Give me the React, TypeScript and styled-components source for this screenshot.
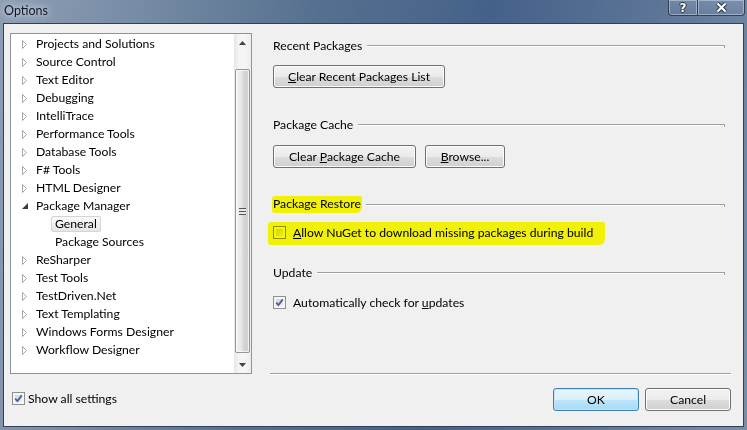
import React from "react";
import styled, { createGlobalStyle } from "styled-components";

const FONT = `"Lato", "Noto Sans", "Liberation Sans", sans-serif`;

const GlobalStyle = createGlobalStyle`
  html, body {
    margin: 0;
    padding: 0;
  }
  body {
    width: 747px;
    height: 430px;
    overflow: hidden;
    font-family: ${FONT};
    font-size: 12.2px;
    color: #000;
  }
  * {
    box-sizing: border-box;
  }
`;

const Frame = styled.div`
  width: 747px;
  height: 430px;
  display: flex;
  flex-direction: column;
  background: linear-gradient(
    100deg,
    #8d9eb3 0%,
    #7b8fa8 14%,
    #56718f 38%,
    #44618a 60%,
    #5c7597 80%,
    #7a8eaa 100%
  );
`;

const TitleBar = styled.div`
  height: 23px;
  display: flex;
  justify-content: space-between;
  align-items: flex-start;
  padding: 0 2px 0 4px;
`;

const Title = styled.div`
  line-height: 21px;
  font-size: 12.5px;
  color: #111827;
  text-shadow: 0 0 6px rgba(235, 240, 247, 0.95), 0 0 12px rgba(220, 228, 238, 0.8);
`;

const CaptionButtons = styled.div`
  display: flex;
`;

const CaptionButton = styled.div<{ $w: number; $side: "left" | "right" }>`
  width: ${({ $w }) => $w}px;
  height: 16px;
  display: flex;
  align-items: center;
  justify-content: center;
  border: 1px solid rgba(28, 40, 58, 0.75);
  border-top: none;
  border-left: ${({ $side }) => ($side === "right" ? "none" : "1px solid rgba(28, 40, 58, 0.75)")};
  border-radius: ${({ $side }) => ($side === "left" ? "0 0 0 4px" : "0 0 4px 0")};
  background: linear-gradient(to bottom, rgba(255, 255, 255, 0.12), rgba(255, 255, 255, 0.02));
  box-shadow: inset 0 0 0 1px rgba(220, 230, 242, 0.45);
`;

const HelpGlyph = styled.span`
  font-family: "DejaVu Sans", sans-serif;
  font-weight: bold;
  font-size: 12px;
  line-height: 14px;
  color: #fff;
  text-shadow: -1px 0 #2b3647, 1px 0 #2b3647, 0 -1px #2b3647, 0 1px #2b3647;
`;

const Client = styled.div`
  flex: 1;
  margin: 0 3px 3px;
  border: 1px solid #2f4058;
  background: #f0f0f0;
  display: flex;
`;

/* ---------- left: tree ---------- */

const LeftCol = styled.div`
  width: 248px;
  padding: 9px 0 0 6px;
  display: flex;
  flex-direction: column;
`;

const TreeBox = styled.div`
  width: 242px;
  height: 341px;
  border: 1px solid #8e949b;
  background: #fff;
  display: flex;
`;

const TreeList = styled.div`
  flex: 1;
  padding-top: 1px;
`;

const TreeRow = styled.div<{ $level: number }>`
  height: 18px;
  display: flex;
  align-items: center;
  padding-left: ${({ $level }) => 7 + $level * 19}px;
`;

const Expander = styled.span`
  width: 14px;
  height: 18px;
  display: flex;
  align-items: center;
  justify-content: center;
`;

const TreeLabel = styled.span<{ $selected?: boolean }>`
  height: 16px;
  line-height: 14px;
  padding: 0 3px;
  white-space: nowrap;
  border: 1px solid ${({ $selected }) => ($selected ? "#d4d4d4" : "transparent")};
  border-radius: 2px;
  background: ${({ $selected }) =>
    $selected ? "linear-gradient(to bottom, #fafafa, #e6e6e6)" : "transparent"};
`;

const ScrollBar = styled.div`
  width: 17px;
  display: flex;
  flex-direction: column;
  background: linear-gradient(to right, #e6e6e6, #f5f5f5 30%, #f5f5f5 70%, #ebebeb);
`;

const ScrollArrow = styled.div`
  height: 17px;
  display: flex;
  align-items: center;
  justify-content: center;
`;

const ScrollTrack = styled.div`
  flex: 1;
  display: flex;
  flex-direction: column;
  padding: 18px 1px 3px;
`;

const ScrollThumb = styled.div`
  flex: 1;
  border: 1px solid #979797;
  border-radius: 2px;
  background: linear-gradient(to right, #f2f2f2, #e6e6e6 45%, #d6d6d6 55%, #cfcfcf);
  box-shadow: inset 0 0 0 1px rgba(255, 255, 255, 0.7);
  display: flex;
  align-items: center;
  justify-content: center;
`;

const Gripper = styled.div`
  width: 7px;
  height: 7px;
  background: repeating-linear-gradient(
    to bottom,
    #555 0px,
    #555 1px,
    #e8e8e8 1px,
    #e8e8e8 3px
  );
`;

const FooterLeft = styled.div`
  margin: 16px 0 0 2px;
`;

/* ---------- checkbox ---------- */

const CheckRow = styled.label`
  height: 16px;
  display: flex;
  align-items: center;
  white-space: nowrap;
`;

const CheckBox = styled.span`
  width: 13px;
  height: 13px;
  flex: none;
  border: 1px solid #8e8f8f;
  background: linear-gradient(135deg, #cbcfd5, #f4f4f4);
  box-shadow: inset 0 0 0 2px #f6f6f6;
  display: flex;
  align-items: center;
  justify-content: center;
`;

const CheckText = styled.span<{ $gap: number }>`
  margin-left: ${({ $gap }) => $gap}px;
`;

const Marker = styled.span<{ $inset: string }>`
  position: relative;
  display: inline-flex;
  align-self: flex-start;
  &::after {
    content: "";
    position: absolute;
    inset: ${({ $inset }) => $inset};
    background: #ffff08;
    mix-blend-mode: multiply;
    border-radius: 3px 2px 6px 3px;
    pointer-events: none;
  }
`;

/* ---------- right: settings ---------- */

const RightCol = styled.div`
  flex: 1;
  margin-left: 18px;
  padding-right: 12px;
  display: flex;
  flex-direction: column;
`;

const Content = styled.div`
  flex: 1;
  padding: 13px 0 0 3px;
  display: flex;
  flex-direction: column;
`;

const Section = styled.section<{ $mt: number; $gap: number }>`
  margin-top: ${({ $mt }) => $mt}px;
  display: flex;
  flex-direction: column;
  gap: ${({ $gap }) => $gap}px;
`;

const GroupHeader = styled.div`
  height: 16px;
  display: flex;
  align-items: center;
  white-space: nowrap;
`;

const GroupLine = styled.div`
  position: relative;
  flex: 1;
  margin: 2px 6px 0 5px;
  height: 2px;
  border-top: 1px solid #a0a0a0;
  border-bottom: 1px solid #ffffff;
  &::after {
    content: "";
    position: absolute;
    right: 0;
    top: 0;
    width: 1px;
    height: 2px;
    background: #a0a0a0;
  }
`;

const ButtonRow = styled.div<{ $gap: number; $end?: boolean }>`
  display: flex;
  gap: ${({ $gap }) => $gap}px;
  justify-content: ${({ $end }) => ($end ? "flex-end" : "flex-start")};
`;

const Button = styled.button<{ $w: number; $default?: boolean }>`
  width: ${({ $w }) => $w}px;
  height: 23px;
  padding: 0;
  font-family: ${FONT};
  font-size: 12.2px;
  color: #000;
  border-radius: 3px;
  border: 1px solid ${({ $default }) => ($default ? "#3c7fb1" : "#707070")};
  background: ${({ $default }) =>
    $default
      ? "linear-gradient(to bottom, #eaf6fd 0%, #d9f0fc 50%, #bee6fd 51%, #a7d9f5 100%)"
      : "linear-gradient(to bottom, #f2f2f2 0%, #ebebeb 50%, #dddddd 51%, #cfcfcf 100%)"};
  box-shadow: inset 0 0 0 1px ${({ $default }) => ($default ? "#c4e5f6" : "#fcfcfc")};
`;

const Separator = styled.div`
  height: 2px;
  border-top: 1px solid #a0a0a0;
  border-bottom: 1px solid #ffffff;
`;

const Footer = styled.div`
  padding: 13px 0 15px;
`;

/* ---------- icons ---------- */

const Collapsed = () => (
  <svg width="6" height="9" viewBox="0 0 6 9">
    <path d="M0.5 0.5 L4.5 4.5 L0.5 8.5 Z" fill="#fff" stroke="#a6a6a6" />
  </svg>
);

const ExpandedIcon = () => (
  <svg width="6" height="6" viewBox="0 0 6 6">
    <path d="M6 0 L6 6 L0 6 Z" fill="#3a3a3a" />
  </svg>
);

const CheckMark = () => (
  <svg width="9" height="9" viewBox="0 0 9 9">
    <path d="M1.2 4.6 L3.4 7 L7.8 1.4" fill="none" stroke="#4a5f97" strokeWidth="1.8" />
  </svg>
);

const CloseGlyph = () => (
  <svg width="13" height="11" viewBox="0 0 13 11">
    <path d="M2.5 1.5 L10.5 9.5 M10.5 1.5 L2.5 9.5" stroke="#2b3647" strokeWidth="4.2" />
    <path d="M2.5 1.5 L10.5 9.5 M10.5 1.5 L2.5 9.5" stroke="#ffffff" strokeWidth="2.2" />
  </svg>
);

const ArrowUp = () => (
  <svg width="7" height="4" viewBox="0 0 7 4">
    <path d="M0 4 L3.5 0 L7 4 Z" fill="#404040" />
  </svg>
);

const ArrowDown = () => (
  <svg width="7" height="4" viewBox="0 0 7 4">
    <path d="M0 0 L3.5 4 L7 0 Z" fill="#404040" />
  </svg>
);

/* ---------- data ---------- */

type Node = { label: string; level?: number; expanded?: boolean; selected?: boolean };

const tree: Node[] = [
  { label: "Projects and Solutions" },
  { label: "Source Control" },
  { label: "Text Editor" },
  { label: "Debugging" },
  { label: "IntelliTrace" },
  { label: "Performance Tools" },
  { label: "Database Tools" },
  { label: "F# Tools" },
  { label: "HTML Designer" },
  { label: "Package Manager", expanded: true },
  { label: "General", level: 1, selected: true },
  { label: "Package Sources", level: 1 },
  { label: "ReSharper" },
  { label: "Test Tools" },
  { label: "TestDriven.Net" },
  { label: "Text Templating" },
  { label: "Windows Forms Designer" },
  { label: "Workflow Designer" },
];

const Check: React.FC<{ checked?: boolean }> = ({ checked }) => (
  <CheckBox>{checked && <CheckMark />}</CheckBox>
);

const App: React.FC = () => {
  return (
    <>
      <GlobalStyle />
      <Frame>
        <TitleBar>
          <Title>Options</Title>
          <CaptionButtons>
            <CaptionButton $w={30} $side="left">
              <HelpGlyph>?</HelpGlyph>
            </CaptionButton>
            <CaptionButton $w={47} $side="right">
              <CloseGlyph />
            </CaptionButton>
          </CaptionButtons>
        </TitleBar>

        <Client>
          <LeftCol>
            <TreeBox>
              <TreeList>
                {tree.map((node) => {
                  const level = node.level ?? 0;
                  return (
                    <TreeRow key={node.label} $level={level}>
                      <Expander>
                        {level === 0 && (node.expanded ? <ExpandedIcon /> : <Collapsed />)}
                      </Expander>
                      <TreeLabel $selected={node.selected}>{node.label}</TreeLabel>
                    </TreeRow>
                  );
                })}
              </TreeList>
              <ScrollBar>
                <ScrollArrow>
                  <ArrowUp />
                </ScrollArrow>
                <ScrollTrack>
                  <ScrollThumb>
                    <Gripper />
                  </ScrollThumb>
                </ScrollTrack>
                <ScrollArrow>
                  <ArrowDown />
                </ScrollArrow>
              </ScrollBar>
            </TreeBox>
            <FooterLeft>
              <CheckRow>
                <Check checked />
                <CheckText $gap={3}>Show all settings</CheckText>
              </CheckRow>
            </FooterLeft>
          </LeftCol>

          <RightCol>
            <Content>
              <Section $mt={0} $gap={12}>
                <GroupHeader>
                  Recent Packages
                  <GroupLine />
                </GroupHeader>
                <ButtonRow $gap={9}>
                  <Button $w={172}>
                    <u>C</u>lear Recent Packages List
                  </Button>
                </ButtonRow>
              </Section>

              <Section $mt={28} $gap={13}>
                <GroupHeader>
                  Package Cache
                  <GroupLine />
                </GroupHeader>
                <ButtonRow $gap={9}>
                  <Button $w={143}>
                    Clear <u>P</u>ackage Cache
                  </Button>
                  <Button $w={80}>
                    <u>B</u>rowse...
                  </Button>
                </ButtonRow>
              </Section>

              <Section $mt={28} $gap={12}>
                <GroupHeader>
                  <Marker $inset="0px -1px -2px -1px">Package Restore</Marker>
                  <GroupLine />
                </GroupHeader>
                <Marker $inset="-2px -12px -5px -5px">
                  <CheckRow>
                    <Check />
                    <CheckText $gap={7}>
                      <u>A</u>llow NuGet to download missing packages during build
                    </CheckText>
                  </CheckRow>
                </Marker>
              </Section>

              <Section $mt={24} $gap={14}>
                <GroupHeader>
                  Update
                  <GroupLine />
                </GroupHeader>
                <CheckRow>
                  <Check checked />
                  <CheckText $gap={7}>
                    Automatically check for <u>u</u>pdates
                  </CheckText>
                </CheckRow>
              </Section>
            </Content>

            <Separator />
            <Footer>
              <ButtonRow $gap={6} $end>
                <Button $w={86} $default>
                  OK
                </Button>
                <Button $w={86}>Cancel</Button>
              </ButtonRow>
            </Footer>
          </RightCol>
        </Client>
      </Frame>
    </>
  );
};

export default App;
